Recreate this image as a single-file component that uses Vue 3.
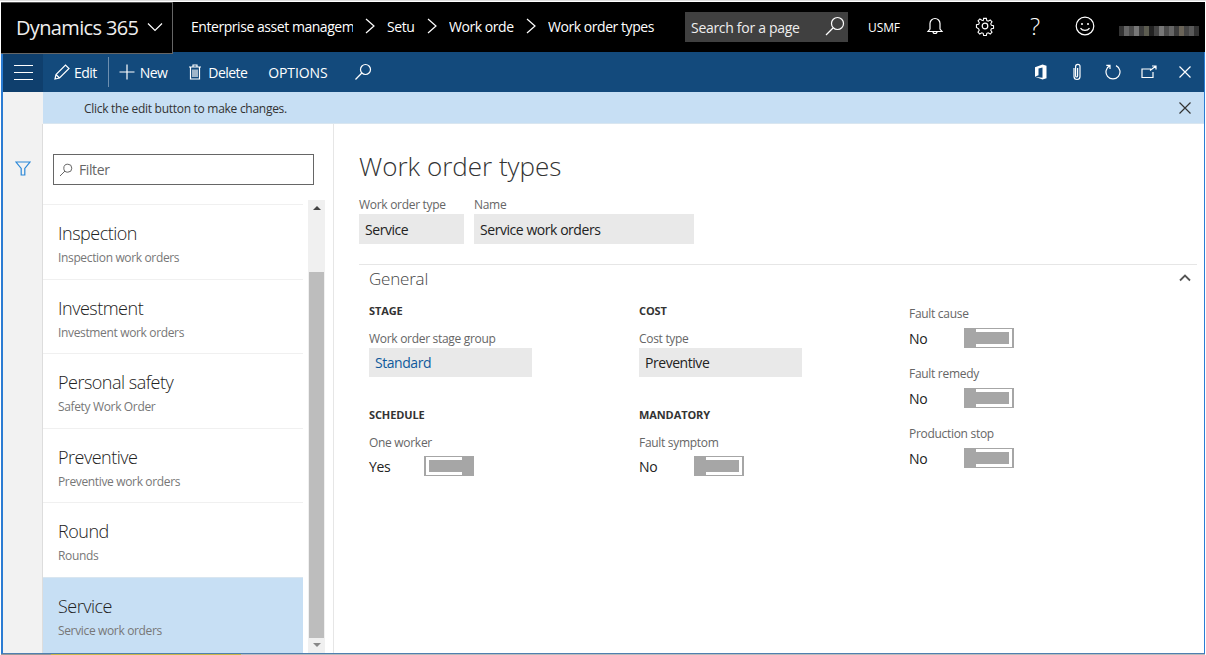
<template>
  <div class="window">
    <header class="topbar">
      <div class="brand">
        <span>Dynamics 365</span>
        <svg width="16" height="10" viewBox="0 0 16 10"><path d="M1 1.500l7 7 7-7" class="line" /></svg>
      </div>
      <nav class="crumbs">
        <template v-for="(c, i) in crumbs" :key="c.text">
          <svg v-if="i" class="chev" width="12" height="16" viewBox="0 0 12 16"><path d="M2 1l8 7-8 7" class="line" /></svg>
          <span :style="{ width: c.width + 'px' }">{{ c.text }}</span>
        </template>
      </nav>
      <div class="page-search">
        <span>Search for a page</span>
        <svg width="20" height="20" viewBox="0 0 20 20"><circle cx="12.500" cy="7.500" r="6" class="line" /><path d="M8 12l-7 7" class="line" /></svg>
      </div>
      <span class="company">USMF</span>
      <div class="sys-icons">
        <svg width="18" height="20" viewBox="0 0 18 20"><path d="M2 15.500h14l-2-2.500V7.500a5 5 0 0 0-10 0v5.500zM7 15.500a2 2 0 0 0 4 0" class="line" /></svg>
        <svg width="20" height="20" viewBox="0 0 20 20"><circle cx="10" cy="10" r="2.800" class="line" /><path d="M8.500 1.500h3l.5 2.500 1.600.7 2.200-1.400 2 2-1.400 2.200.7 1.600 2.400.5v3l-2.400.5-.7 1.600 1.400 2.200-2 2-2.200-1.400-1.600.7-.5 2.400h-3l-.5-2.400-1.600-.7-2.200 1.400-2-2 1.400-2.200-.7-1.600L.5 11.500v-3L3 8l.7-1.600-1.400-2.200 2-2 2.200 1.400L8 3.900z" class="line" transform="translate(1 1) scale(.9)" /></svg>
        <span class="help">?</span>
        <svg width="20" height="20" viewBox="0 0 20 20"><circle cx="10" cy="10" r="8.800" class="line" /><circle cx="7" cy="8" r="1" fill="#fff" /><circle cx="13" cy="8" r="1" fill="#fff" /><path d="M5.500 12.200c2 3 7 3 9 0" class="line" /></svg>
      </div>
      <div class="user">
        <i v-for="(shade, i) in userShades" :key="i" :style="{ background: shade }"></i>
      </div>
    </header>

    <div class="frame">
      <div class="commandbar">
        <button class="burger"><i></i><i></i><i></i></button>
        <div class="cmd cmd-edit">
          <svg width="16" height="16" viewBox="0 0 16 16"><path d="M1 15l1-4.500L11.500 1l3.500 3.500L5.500 14zM2 10.500L5.500 14" class="line" /></svg>
          <span>Edit</span>
        </div>
        <span class="cmd-sep"></span>
        <div class="cmd cmd-new">
          <svg width="16" height="16" viewBox="0 0 16 16"><path d="M8 .5v15M.5 8h15" class="line" /></svg>
          <span>New</span>
        </div>
        <div class="cmd cmd-delete">
          <svg width="14" height="16" viewBox="0 0 14 16"><path d="M1 3h12M5 3V1h4v2M2.500 3v12h9V3M5 5.500v7.500M7 5.500v7.500M9 5.500v7.500" class="line" /></svg>
          <span>Delete</span>
        </div>
        <div class="cmd cmd-options"><span>OPTIONS</span></div>
        <svg class="cmd-search" width="18" height="18" viewBox="0 0 18 18"><circle cx="11.500" cy="6.500" r="5" class="line" /><path d="M7.800 10L1.500 16.500" class="line" /></svg>
        <div class="cmd-right">
          <svg width="14" height="16" viewBox="0 0 14 16"><path d="M1 3.200L8.500.5l4 1.300v12.400l-4 1.300L1 12.800l7.500 1V3.500L4.500 4.500v6.800L1 12.800z" fill="#fff" /></svg>
          <svg width="12" height="18" viewBox="0 0 12 18"><path d="M3 5v8.500a3 3 0 0 0 6 0V3.500a2.200 2.200 0 0 0-4.400 0v9.500a1 1 0 0 0 2 0V5" class="line" /></svg>
          <svg width="16" height="16" viewBox="0 0 16 16"><path d="M5 1.600a7 7 0 1 0 6 0M5 5V1.300H1.300" class="line" /></svg>
          <svg width="16" height="14" viewBox="0 0 16 14"><path d="M10 4H1v8.500h11V7M9 5.500L15 1M11 1h4v3.500" class="line" /></svg>
          <svg width="12" height="12" viewBox="0 0 12 12"><path d="M.5.500l11 11M11.500.500l-11 11" class="line" /></svg>
        </div>
      </div>

      <div class="body">
        <aside class="strip">
          <svg width="16" height="15" viewBox="0 0 16 15"><path d="M1 1h14L9.800 7.500V14H6.200V7.500z" fill="none" stroke="#2b88d8" stroke-width="1.200" /></svg>
        </aside>

        <div class="content">
          <div class="message">
            <span>Click the edit button to make changes.</span>
            <svg width="12" height="12" viewBox="0 0 12 12"><path d="M.5.500l11 11M11.500.500l-11 11" class="line dark" /></svg>
          </div>

          <div class="panes">
            <section class="listpane">
              <div class="filter">
                <svg width="14" height="14" viewBox="0 0 14 14"><circle cx="8.800" cy="5.200" r="4" fill="none" stroke="#666" /><path d="M6 8L1 13" fill="none" stroke="#666" /></svg>
                <span>Filter</span>
              </div>
              <div class="list-wrap">
                <ul class="list">
                  <li v-for="item in items" :key="item.name" :class="{ selected: item.selected }">
                    <div class="item-name">{{ item.name }}</div>
                    <div class="item-sub">{{ item.sub }}</div>
                  </li>
                </ul>
                <div class="scrollbar">
                  <span class="arrow up"></span>
                  <span class="scroll-gap"></span>
                  <span class="thumb"></span>
                  <span class="arrow down"></span>
                </div>
              </div>
            </section>

            <main class="detail">
              <h1>Work order types</h1>
              <div class="head-fields">
                <div>
                  <label>Work order type</label>
                  <div class="input w-type">Service</div>
                </div>
                <div>
                  <label>Name</label>
                  <div class="input w-name">Service work orders</div>
                </div>
              </div>

              <div class="general">
                <div class="general-head">
                  <span>General</span>
                  <svg width="12" height="8" viewBox="0 0 12 8"><path d="M1 6.500l5-5 5 5" fill="none" stroke="#555" stroke-width="1.800" /></svg>
                </div>
                <div class="columns">
                  <div class="col">
                    <h3>STAGE</h3>
                    <label>Work order stage group</label>
                    <div class="input w-field link">Standard</div>
                    <h3 class="second">SCHEDULE</h3>
                    <label>One worker</label>
                    <div class="toggle-row">
                      <span>Yes</span>
                      <div class="toggle on"><i></i></div>
                    </div>
                  </div>
                  <div class="col">
                    <h3>COST</h3>
                    <label>Cost type</label>
                    <div class="input w-field">Preventive</div>
                    <h3 class="second">MANDATORY</h3>
                    <label>Fault symptom</label>
                    <div class="toggle-row">
                      <span>No</span>
                      <div class="toggle"><i></i></div>
                    </div>
                  </div>
                  <div class="col col-toggles">
                    <div v-for="t in faults" :key="t" class="fault">
                      <label>{{ t }}</label>
                      <div class="toggle-row">
                        <span>No</span>
                        <div class="toggle"><i></i></div>
                      </div>
                    </div>
                  </div>
                </div>
              </div>
            </main>
          </div>
        </div>
      </div>
    </div>
    <div class="desktop-edge"></div>
  </div>
</template>

<script setup>
const crumbs = [
  { text: 'Enterprise asset managem', width: 162 },
  { text: 'Setu', width: 28 },
  { text: 'Work orde', width: 65 },
  { text: 'Work order types', width: 107 },
]

const items = [
  { name: 'Inspection', sub: 'Inspection work orders' },
  { name: 'Investment', sub: 'Investment work orders' },
  { name: 'Personal safety', sub: 'Safety Work Order' },
  { name: 'Preventive', sub: 'Preventive work orders' },
  { name: 'Round', sub: 'Rounds' },
  { name: 'Service', sub: 'Service work orders', selected: true },
]

const faults = ['Fault cause', 'Fault remedy', 'Production stop']

// the user name is pixelated in the screenshot
const userShades = ['#333', '#666', '#4c4c4c', '#777', '#3c3c3c', '#5c5c50', '#222', '#444', '#777', '#4c4c4c', '#666', '#3c3c3c', '#6a6458', '#454545', '#5a5a5a', '#333']
</script>

<style>
html, body {
  margin: 0;
  background: #fff;
}
</style>

<style scoped>
.window {
  width: 1206px;
  height: 655px;
  box-sizing: border-box;
  padding: 1px 1px 0 1px;
  border-top: 1px solid #ddd;
  display: flex;
  flex-direction: column;
  overflow: hidden;
  font-family: "Open Sans", "Liberation Sans", sans-serif;
  color: #222;
  background: #fff;
}
.line {
  fill: none;
  stroke: #fff;
  stroke-width: 1.200;
}
.line.dark {
  stroke: #333;
}

/* top bar */
.topbar {
  height: 50px;
  flex: none;
  display: flex;
  align-items: center;
  background: #000;
  color: #fff;
}
.brand {
  width: 172px;
  height: 52px;
  flex: none;
  align-self: flex-start;
  box-sizing: border-box;
  padding-bottom: 2px;
  border-top: 1px solid #555;
  border-right: 1px solid #666;
  border-bottom: 1px solid #666;
  display: flex;
  align-items: center;
  gap: 9px;
  padding-left: 15px;
  font-size: 20px;
  letter-spacing: -0.65px;
  color: #eee;
  position: relative;
  z-index: 1;
  background: #000;
}
.crumbs {
  display: flex;
  align-items: center;
  padding-left: 18px;
  width: 496px;
  flex: none;
  box-sizing: border-box;
  margin-top: -2px;
  font-size: 14px;
  letter-spacing: -0.45px;
}
.crumbs span {
  white-space: nowrap;
  overflow: hidden;
}
.chev {
  margin: 0 11px;
  flex: none;
}
.page-search {
  width: 163px;
  height: 30px;
  flex: none;
  margin-left: 16px;
  box-sizing: border-box;
  padding: 0 2px 0 6px;
  background: #404040;
  display: flex;
  align-items: center;
  justify-content: space-between;
  font-size: 14px;
  letter-spacing: -0.3px;
  color: #eee;
}
.page-search svg {
  margin-right: 1px;
  margin-top: -2px;
}
.company {
  margin-left: 20px;
  width: 32px;
  font-size: 12px;
  flex: none;
  letter-spacing: -0.1px;
}
.sys-icons {
  display: grid;
  grid-template-columns: repeat(4, 50px);
  justify-items: center;
  align-items: center;
  margin-left: 10px;
  flex: none;
  margin-top: -2px;
}
.help {
  font-size: 24px;
  font-weight: 300;
  line-height: 24px;
}
.user {
  margin-left: 9px;
  display: flex;
  height: 10px;
  margin-top: 7px;
}
.user i {
  width: 5px;
  height: 10px;
}

/* frame round the form */
.frame {
  flex: 1;
  min-height: 0;
  display: flex;
  flex-direction: column;
  border-left: 2px solid #2b7cd3;
  border-right: 1px solid #2b7cd3;
  border-bottom: 1px solid #4f7fb0;
}

/* command bar */
.commandbar {
  height: 40px;
  flex: none;
  display: flex;
  align-items: center;
  background: #134a7c;
  color: #fff;
  font-size: 14px;
}
.burger {
  width: 40px;
  height: 40px;
  flex: none;
  padding: 0 10px 0 11px;
  border: 0;
  background: #0f3f6d;
  display: flex;
  flex-direction: column;
  justify-content: center;
  gap: 6px;
}
.burger i {
  display: block;
  height: 1px;
  background: #fff;
}
.cmd {
  display: flex;
  align-items: center;
  gap: 4px;
  letter-spacing: -0.55px;
}
.cmd-edit {
  margin-left: 11px;
}
.cmd-sep {
  width: 1px;
  height: 30px;
  margin-left: 11px;
  background: #6d8fb0;
}
.cmd-new {
  margin-left: 10px;
  gap: 5px;
}
.cmd-delete {
  margin-left: 21px;
  gap: 6px;
}
.cmd-options {
  margin-left: 21px;
  letter-spacing: -0.1px;
}
.cmd-search {
  margin-left: 26px;
}
.cmd-right {
  margin-left: auto;
  display: grid;
  grid-template-columns: repeat(5, 36px);
  justify-items: center;
  align-items: center;
  margin-right: 1px;
}

/* body */
.body {
  flex: 1;
  min-height: 0;
  display: flex;
}
.strip {
  width: 40px;
  flex: none;
  box-sizing: border-box;
  background: #f2f2f2;
  padding-top: 69px;
  display: flex;
  justify-content: center;
}
.content {
  flex: 1;
  min-width: 0;
  display: flex;
  flex-direction: column;
}
.message {
  height: 32px;
  flex: none;
  box-sizing: border-box;
  padding: 1px 13px 0 41px;
  display: flex;
  align-items: center;
  justify-content: space-between;
  background: #c7dff4;
  border-bottom: 1px solid #d9e6f0;
  font-size: 12px;
  letter-spacing: -0.28px;
  color: #333;
}
.panes {
  flex: 1;
  min-height: 0;
  display: flex;
}
.listpane {
  width: 292px;
  flex: none;
  box-sizing: border-box;
  border-left: 1px solid #ddd;
  border-right: 1px solid #e6e6e6;
  margin-left: -1px;
  display: flex;
  flex-direction: column;
}
.filter {
  width: 261px;
  height: 31px;
  box-sizing: border-box;
  margin: 30px 0 0 10px;
  border: 1px solid #666;
  display: flex;
  align-items: center;
  gap: 6px;
  padding-left: 5px;
  font-size: 14px;
  letter-spacing: -0.4px;
  color: #666;
}
.list-wrap {
  flex: 1;
  min-height: 0;
  display: flex;
  margin-top: 15px;
}
.list {
  list-style: none;
  margin: 4px 0 0;
  padding: 0;
  width: 260px;
  flex: none;
}
.list li {
  height: 74.500px;
  box-sizing: border-box;
  padding: 15px 0 0 15px;
  border-top: 1px solid #f0f0f0;
}
.list li.selected {
  height: 76px;
  background: #c7dff4;
  border-top-color: #d9e6f0;
}
.item-name {
  font-size: 18px;
  line-height: 26px;
  font-weight: 300;
  letter-spacing: -0.5px;
  color: #222;
}
.item-sub {
  font-size: 12px;
  line-height: 20px;
  margin-top: 2px;
  letter-spacing: -0.35px;
  color: #777;
}
.scrollbar {
  width: 17px;
  margin-left: 5px;
  background: #f0f0f0;
  display: flex;
  flex-direction: column;
  align-items: center;
}
.arrow {
  flex: none;
  width: 0;
  height: 0;
  border-left: 4px solid transparent;
  border-right: 4px solid transparent;
}
.arrow.up {
  margin-top: 6px;
  border-bottom: 4px solid #444;
}
.arrow.down {
  margin: 5px 0 6px;
  border-top: 4px solid #888;
}
.scroll-gap {
  height: 62px;
  flex: none;
}
.thumb {
  width: 15px;
  flex: 1;
  background: #bdbdbd;
}

/* detail */
.detail {
  flex: 1;
  min-width: 0;
  padding: 24px 7px 0 25px;
}
h1 {
  margin: 0;
  font-size: 26px;
  line-height: 36px;
  font-weight: 300;
  color: #333;
}
label {
  display: block;
  font-size: 12px;
  line-height: 16px;
  letter-spacing: -0.3px;
  color: #666;
}
.head-fields {
  display: flex;
  gap: 10px;
  margin-top: 13px;
}
.head-fields label {
  margin-bottom: 1px;
}
.input {
  height: 30px;
  box-sizing: border-box;
  padding-left: 6px;
  display: flex;
  align-items: center;
  background: #e9e9e9;
  font-size: 14px;
  letter-spacing: -0.45px;
  color: #222;
}
.w-type {
  width: 105px;
}
.w-name {
  width: 220px;
}
.w-field {
  width: 163px;
  height: 29px;
}
.link {
  color: #0f5a9c;
}
.general {
  margin-top: 20px;
  border-top: 1px solid #e6e6e6;
}
.general-head {
  height: 28px;
  padding: 0 6px 2px 10px;
  box-sizing: border-box;
  display: flex;
  align-items: center;
  justify-content: space-between;
  font-size: 17px;
  font-weight: 300;
  letter-spacing: -0.2px;
  color: #444;
}
.columns {
  display: grid;
  grid-template-columns: repeat(3, 270px);
  padding-left: 10px;
  margin-top: 10px;
}
h3 {
  margin: 0 0 12px;
  font-size: 11px;
  line-height: 16px;
  font-weight: 700;
  letter-spacing: -0.1px;
  color: #333;
}
h3.second {
  margin-top: 30px;
}
.col label {
  margin-bottom: 1px;
}
.toggle-row {
  display: flex;
  align-items: center;
  font-size: 14px;
  height: 20px;
  color: #222;
  margin-top: 5px;
}
.toggle-row span {
  width: 55px;
  flex: none;
  letter-spacing: -0.3px;
}
.toggle {
  width: 50px;
  height: 20px;
  box-sizing: border-box;
  padding: 3px;
  border: solid #a6a6a6;
  border-width: 1px 2px;
  background: #fff;
  position: relative;
}
.toggle i {
  display: block;
  height: 12px;
  background: #a6a6a6;
}
.toggle::after {
  content: "";
  position: absolute;
  top: -1px;
  bottom: -1px;
  left: -2px;
  width: 12px;
  background: #a6a6a6;
}
.toggle.on::after {
  left: auto;
  right: -2px;
}
.col-toggles {
  margin-top: 3px;
}
.fault {
  height: 60px;
}
.fault label {
  margin-bottom: 0;
}
.fault .toggle-row {
  margin-top: 6px;
}
.desktop-edge {
  height: 1px;
  flex: none;
  background: linear-gradient(to right, #999 0 50px, #c9b64a 50px 240px, #bbb 240px);
}
</style>
